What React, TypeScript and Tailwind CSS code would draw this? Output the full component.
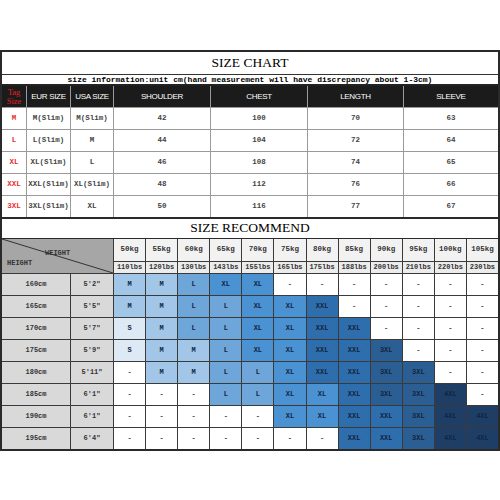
import React from 'react';

const MONO = "font-['Liberation_Mono',monospace]";
const SERIF = "font-['Liberation_Serif',serif]";
const SANS = "font-['Liberation_Sans',Arial,sans-serif]";

const CHART_ROWS = [
  ['M', 'M(Slim)', 'M(Slim)', '42', '100', '70', '63'],
  ['L', 'L(Slim)', 'M', '44', '104', '72', '64'],
  ['XL', 'XL(Slim)', 'L', '46', '108', '74', '65'],
  ['XXL', 'XXL(Slim)', 'XL(Slim)', '48', '112', '76', '66'],
  ['3XL', '3XL(Slim)', 'XL', '50', '116', '77', '67'],
];

const KG = ['50kg', '55kg', '60kg', '65kg', '70kg', '75kg', '80kg', '85kg', '90kg', '95kg', '100kg', '105kg'];
const LBS = ['110lbs', '120lbs', '130lbs', '143lbs', '155lbs', '165lbs', '175lbs', '188lbs', '200lbs', '210lbs', '220lbs', '230lbs'];

const HEIGHTS: [string, string, string[]][] = [
  ['160cm', "5'2″", ['M', 'M', 'L', 'XL', 'XL', '-', '-', '-', '-', '-', '-', '-']],
  ['165cm', "5'5″", ['M', 'M', 'L', 'L', 'XL', 'XL', 'XXL', '-', '-', '-', '-', '-']],
  ['170cm', "5'7″", ['S', 'M', 'L', 'L', 'XL', 'XL', 'XXL', 'XXL', '-', '-', '-', '-']],
  ['175cm', "5'9″", ['S', 'M', 'M', 'L', 'XL', 'XL', 'XXL', 'XXL', '3XL', '-', '-', '-']],
  ['180cm', "5'11″", ['-', 'M', 'M', 'L', 'L', 'XL', 'XXL', 'XXL', '3XL', '3XL', '-', '-']],
  ['185cm', "6'1″", ['-', '-', '-', 'L', 'L', 'XL', 'XL', 'XXL', '3XL', '3XL', '4XL', '-']],
  ['190cm', "6'1″", ['-', '-', '-', '-', '-', 'XL', 'XL', 'XXL', 'XXL', '3XL', '4XL', '4XL']],
  ['195cm', "6'4″", ['-', '-', '-', '-', '-', '-', '-', 'XXL', 'XXL', '3XL', '4XL', '4XL']],
];

const SIZE_BG: Record<string, string> = {
  S: 'bg-[#dde9f5]',
  M: 'bg-[#a2c6e8]',
  L: 'bg-[#6fa6da]',
  XL: 'bg-[#4b92d2]',
  XXL: 'bg-[#2f6ead]',
  '3XL': 'bg-[#2b5e92]',
  '4XL': 'bg-[#1e3e65]',
  '-': 'bg-white',
};

export default function App() {
  return (
    <div className="w-[500px] h-[500px] bg-white pt-[50px]">
      <div className="w-[500px] border-2 border-[#2a2a2a]">
        {/* size chart */}
        <div className={`h-[23px] flex items-center justify-center text-[13.5px] text-black ${SERIF} border-b border-[#333]`}>
          SIZE CHART
        </div>
        <div className={`h-[11px] flex items-center justify-center text-[8px] font-bold text-black ${MONO} border-b-2 border-[#222]`}>
          size information:unit cm(hand measurement will have discrepancy about 1-3cm)
        </div>
        <div className="grid grid-cols-[24px_43px_42px_96px_96px_95px_94px] auto-rows-[21px] gap-px bg-[#9a9a9a]">
          <div className={`bg-[#1b1b1b] flex flex-col items-center justify-center leading-[9px] text-[8.5px] text-[#e02424] ${SERIF}`}>
            <span>Tag</span>
            <span>Size</span>
          </div>
          {['EUR SIZE', 'USA SIZE', 'SHOULDER', 'CHEST', 'LENGTH', 'SLEEVE'].map((h) => (
            <div key={h} className={`bg-[#1b1b1b] flex items-center justify-center text-[8px] tracking-[-0.3px] text-white ${SANS}`}>
              {h}
            </div>
          ))}
          {CHART_ROWS.map((row) =>
            row.map((cell, i) => (
              <div
                key={row[0] + i}
                className={`bg-white flex items-center justify-center text-[7.5px] font-bold ${MONO} ${i === 0 ? 'text-[#e53030]' : 'text-[#444]'}`}
              >
                {cell}
              </div>
            ))
          )}
        </div>

        {/* size recommend */}
        <div className={`h-[22px] flex items-center justify-center text-[13.5px] text-black ${SERIF} border-t-2 border-b border-[#2a2a2a]`}>
          SIZE RECOMMEND
        </div>
        <div className="grid grid-cols-[68px_42px_repeat(12,minmax(0,1fr))] grid-rows-[22px_11px] auto-rows-[21px] gap-px bg-[#3a3a3a]">
          <div className={`col-span-2 row-span-2 relative bg-[#a6a6a6] text-[7px] font-bold text-[#333] ${MONO}`}>
            <svg className="absolute inset-0 w-full h-full" viewBox="0 0 100 100" preserveAspectRatio="none">
              <line x1="0" y1="0" x2="100" y2="100" stroke="#333" strokeWidth="1" vectorEffect="non-scaling-stroke" />
            </svg>
            <div className="flex flex-col pt-[10px]">
              <span className="pl-[43px] leading-[8px]">WEIGHT</span>
              <span className="pl-[5px] leading-[8px] pt-[2px]">HEIGHT</span>
            </div>
          </div>
          {KG.map((k) => (
            <div key={k} className={`bg-[#f2f2f2] flex items-center justify-center text-[7.5px] font-bold text-[#333] ${MONO}`}>
              {k}
            </div>
          ))}
          {LBS.map((l) => (
            <div key={l} className={`bg-[#ececec] flex items-center justify-center text-[7px] font-bold text-[#333] ${MONO}`}>
              {l}
            </div>
          ))}
          {HEIGHTS.map(([cm, ft, sizes]) => (
            <React.Fragment key={cm}>
              <div className={`bg-[#d9d9d9] flex items-center justify-center text-[7px] font-bold text-[#333] ${MONO}`}>{cm}</div>
              <div className={`bg-[#d9d9d9] flex items-center justify-center text-[7px] font-bold text-[#333] ${MONO}`}>{ft}</div>
              {sizes.map((s, i) => (
                <div
                  key={i}
                  className={`${SIZE_BG[s]} flex items-center justify-center text-[7px] font-bold ${MONO} ${s === '-' ? 'text-[#444]' : 'text-[#14243f]'}`}
                >
                  {s}
                </div>
              ))}
            </React.Fragment>
          ))}
        </div>
      </div>
    </div>
  );
}
